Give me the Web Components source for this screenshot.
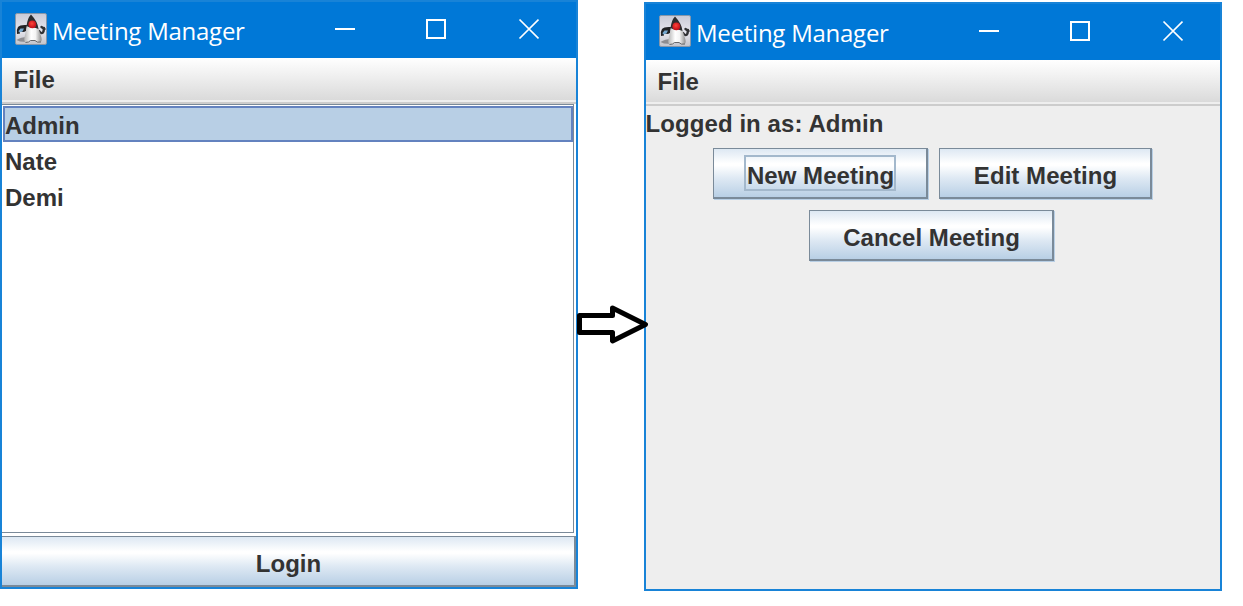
<!DOCTYPE html>
<html lang="en"><head><meta charset="utf-8"><title>Meeting Manager</title>
<style>html,body{margin:0;height:606px;overflow:hidden;background:#fff}</style></head>
<body><meeting-flow></meeting-flow>
<script>
const define = (name, html) => customElements.define(name, class extends HTMLElement {
  constructor() {
    super();
    const t = document.createElement('template');
    t.innerHTML = html;
    this.attachShadow({mode: 'open'}).append(t.content.cloneNode(true));
  }
});

define('duke-icon', `<style>:host{display:block;width:32px;height:32px}svg{display:block}</style>
<svg width="32" height="32" viewBox="0 0 32 32">
<defs><linearGradient id="b" x1="0" y1="0" x2="0" y2="1"><stop offset="0" stop-color="#c9cad6"/><stop offset=".55" stop-color="#e6e6ee"/><stop offset="1" stop-color="#c3c4ca"/></linearGradient>
<linearGradient id="w" x1="0" y1="0" x2="1" y2="0"><stop offset="0" stop-color="#b4b4b4"/><stop offset=".4" stop-color="#fff"/><stop offset=".65" stop-color="#f4f4f4"/><stop offset="1" stop-color="#8c8c8c"/></linearGradient>
<radialGradient id="r" cx=".45" cy=".4"><stop offset="0" stop-color="#ff4338"/><stop offset="1" stop-color="#c8141c"/></radialGradient></defs>
<rect x=".5" y=".5" width="31" height="31" rx="1.500" fill="url(#b)" stroke="#8797aa"/>
<path d="M1.500 27Q6 24 12 24L12 29L5 28.500Z" fill="#8d8d91"/>
<path d="M12 12Q5 11.500 3 14Q1 17 2 21L5 20.500L5 18Q8 20 11 18Z" fill="#202124"/>
<path d="M3.500 18L5.500 15.500L9 15.500L7.500 18.500L4 19.500Z" fill="#75a8cf"/>
<path d="M24 18Q27 22 28.500 18.500L29 15M26.500 14L29.500 16" fill="none" stroke="#303134" stroke-width="2.400" stroke-linecap="round"/>
<path d="M12 13L10 22Q8 29 11 29.500Q14 29.500 15.500 27.500H20Q22 30 25.500 29Q27.500 28 26 23L23 14Z" fill="url(#w)"/>
<path d="M10.500 29.500Q14 29.500 15.500 27.500H20Q22 30 26 29" fill="none" stroke="#66676a"/>
<path d="M16 1.500Q12.500 5 11.500 13Q14 14.500 17.500 14.500Q21 14.500 23.500 16Q23 9 16 1.500Z" fill="#2b2c2f"/>
<circle cx="17.300" cy="11.300" r="3.900" fill="url(#r)"/></svg>`);

define('title-bar', `<style>:host{display:flex;height:56px;background:#0078d7;color:#fff;padding-left:13px;box-sizing:border-box;align-items:center}
duke-icon{margin-top:-2px}
.t{flex:1;margin:1px 0 0 5px;font:24px/32px "Open Sans","Noto Sans",sans-serif;letter-spacing:-.25px;white-space:nowrap}
svg{display:block;margin-right:37px;margin-top:-3px}</style>
<duke-icon></duke-icon><div class="t"><slot></slot></div>
<svg width="205" height="22" viewBox="0 0 205 22" fill="none" stroke="#fff" stroke-width="2"><path d="M1 11H21"/><rect x="93" y="2" width="18" height="18"/><path d="M185.500 1.500L204.500 20.500M204.500 1.500L185.500 20.500" stroke-width="1.700"/></svg>`);

define('menu-bar', `<style>:host{display:block;box-sizing:border-box;height:46px;padding-left:11.500px;background:linear-gradient(#fff,#dadada) 0 0/100% 42px no-repeat,#eee;border-bottom:2px solid #ccc;font:bold 24px/44px "Liberation Sans",Arial,sans-serif;color:#333}</style><slot></slot>`);

define('app-window', `<style>:host{display:flex;flex-direction:column;box-sizing:border-box;width:578px;height:589px;border:2px solid #1883d7;background:#eee;color:#333;font:bold 24px/28px "Liberation Sans",Arial,sans-serif}
.c{flex:1;min-height:0;display:flex;flex-direction:column}</style>
<title-bar>Meeting Manager</title-bar><menu-bar>File</menu-bar><div class="c"><slot></slot></div>`);

define('user-list', `<style>:host{display:flex;flex-direction:column;box-sizing:border-box;height:429px;margin-right:2px;padding:1px 0 0 1px;background:#fff;border:solid #7a8a99;border-width:1px 1px 1px 0}</style><slot></slot>`);

define('list-item', `<style>:host{display:block;box-sizing:border-box;height:36px;padding:6px 0 0 2px;white-space:nowrap}
:host([selected]){background:#b8cfe5;border:2px solid #6382bf;padding:4px 0 0 0}</style><slot></slot>`);

define('metal-button', `<style>:host{display:flex;box-sizing:border-box;align-items:center;justify-content:center;height:51px;border:solid #7a8a99;border-width:1px 2px 2px 1px;background:linear-gradient(#dde8f3 0%,#fff 30%,#fff 34%,#dde8f3 62%,#b8cfe5 100%);box-shadow:1px 1px #b8cfe5;white-space:nowrap}
:host([wide]){box-shadow:none;border-left:0}
span{display:flex;align-items:center;justify-content:center;box-sizing:border-box;height:36px;padding:6px 0 0 1px;letter-spacing:.05px}
:host([focused]) span{width:152px;height:36px;border:2px solid #a3b8cc;padding:6px 0 0 1px}</style><span><slot></slot></span>`);

define('flow-arrow', `<style>:host{display:block;width:66px;height:606px}svg{display:block;overflow:visible}</style>
<svg width="66" height="606" viewBox="578 0 66 606"><path d="M579.500 315.500H612.500V308L645.500 324.500L612.500 341V332.500H579.500Z" fill="#fff" stroke="#000" stroke-width="5" stroke-linejoin="round"/></svg>`);

define('meeting-flow', `<style>:host{display:flex;align-items:flex-start;width:1243px;height:606px}
flow-arrow{position:relative;z-index:1}
.right{margin-top:2px}
.gap{height:3px;background:#fff}
.login{background:#fff;display:flex;flex-direction:column}
.who{padding-top:4px;height:38px;white-space:nowrap;letter-spacing:.08px;margin-left:-.5px}
.row{display:flex;gap:11px;padding-left:67px;margin-bottom:11px}
.row+.row{padding-left:163px}</style>
<app-window><div class="login"><user-list><list-item selected>Admin</list-item><list-item>Nate</list-item><list-item>Demi</list-item></user-list><div class="gap"></div><metal-button wide>Login</metal-button></div></app-window>
<flow-arrow></flow-arrow>
<app-window class="right"><div class="who">Logged in as: Admin</div>
<div class="row"><metal-button focused style="width:215px">New Meeting</metal-button><metal-button style="width:213px">Edit Meeting</metal-button></div>
<div class="row"><metal-button style="width:245px">Cancel Meeting</metal-button></div></app-window>`);
</script></body></html>
